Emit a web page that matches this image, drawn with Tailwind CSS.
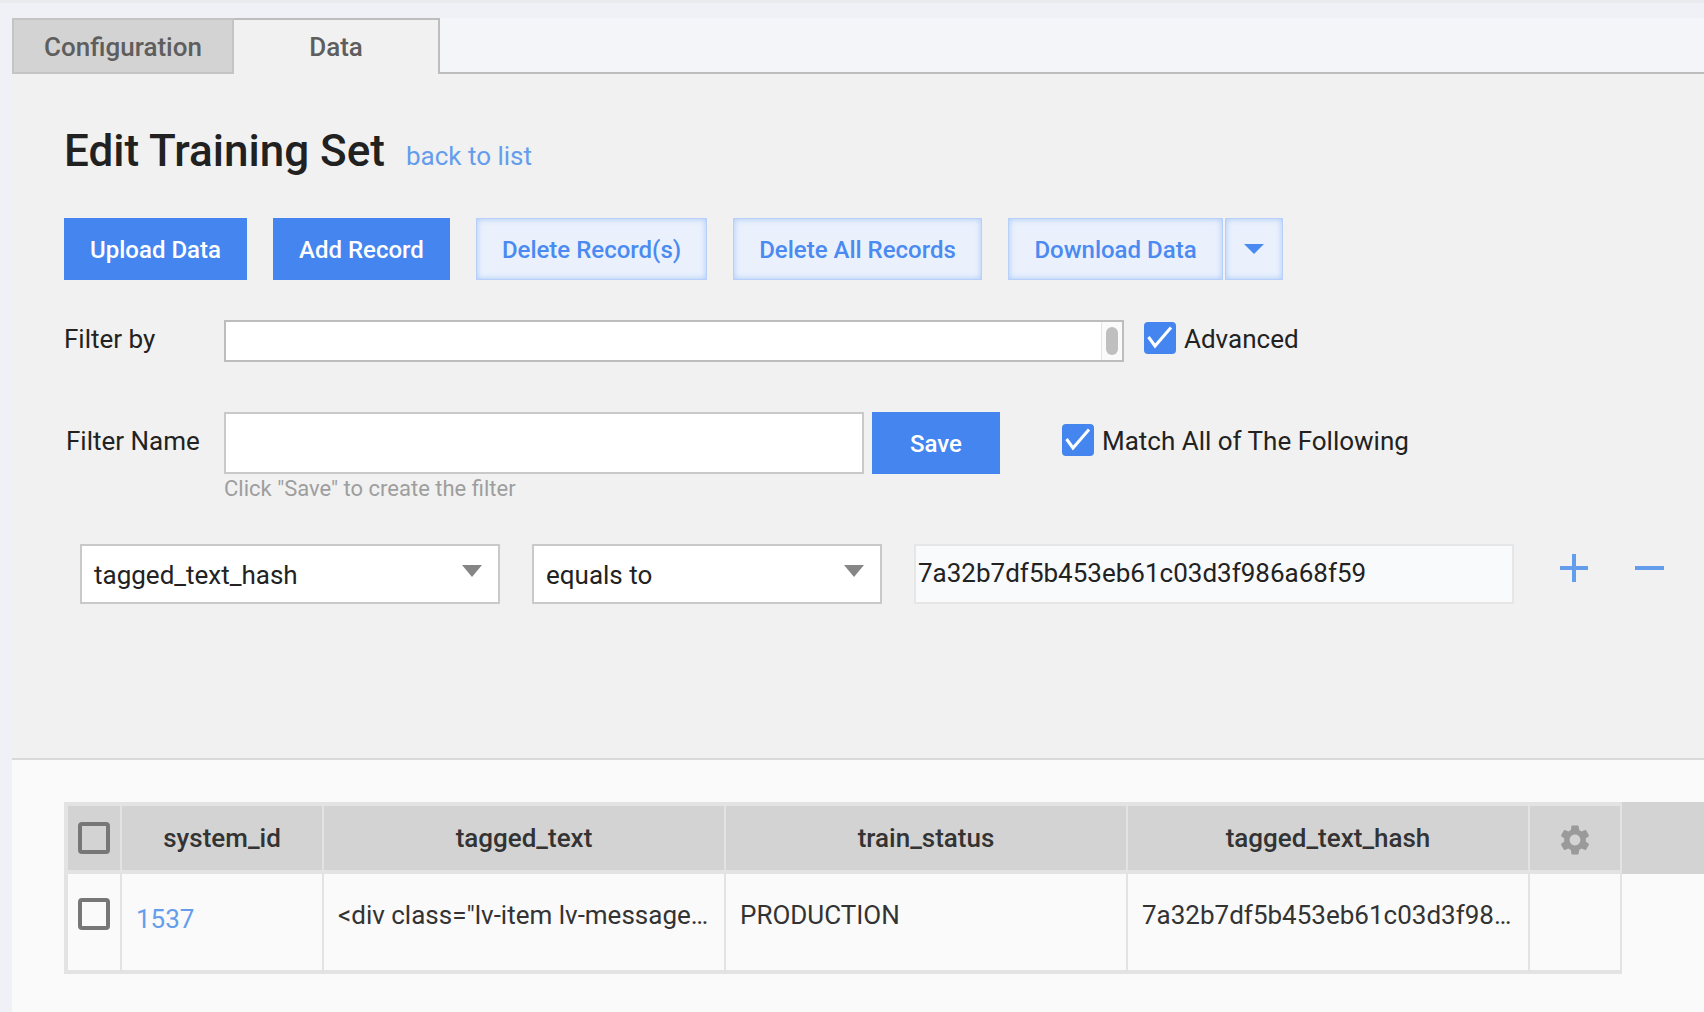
<!DOCTYPE html>
<html lang="en">
<head>
  <meta charset="UTF-8" />
  <title>Edit Training Set</title>
  <script src="https://cdn.jsdelivr.net/npm/@tailwindcss/browser@4"></script>
</head>
<body class="bg-[#eff1f6] font-['Roboto',sans-serif] text-[#222] overflow-hidden">
  <div class="h-[1012px] flex flex-col">
    <div class="h-[3px] bg-[#e9ebef]"></div>
    <div class="flex-1 pl-[12px] pt-[15px] flex flex-col">

      <!-- tabs -->
      <div class="flex h-[56px] bg-[#f3f5f9] border-b-2 border-[#bdbdbd]">
        <div class="w-[222px] h-[56px] pt-[2px] flex items-center justify-center bg-[#d3d3d3] border-2 border-[#c4c4c4] text-[26px] font-medium text-[#5e5e5e]">Configuration</div>
        <div class="w-[206px] h-[56px] flex items-center justify-center bg-[#f1f1f1] border-2 border-l-0 border-b-0 border-[#bdbdbd] text-[26px] font-medium text-[#5e5e5e]">Data</div>
      </div>

      <!-- form panel -->
      <div class="h-[686px] bg-[#f1f1f1] border-b-2 border-[#d9d9d9] pl-[52px]">
        <div class="mt-[47px] h-[60px] flex items-center">
          <h1 class="text-[44px] font-medium text-[#212121]">Edit Training Set</h1>
          <a class="ml-[21px] mt-[11px] text-[26px] text-[#659ded]">back to list</a>
        </div>

        <div class="mt-[37px] flex h-[62px] text-[24px] font-medium">
          <button class="w-[183px] pt-[2px] bg-[#4485f0] text-white">Upload Data</button>
          <button class="ml-[26px] w-[177px] pt-[2px] bg-[#4485f0] text-white">Add Record</button>
          <button class="ml-[26px] w-[231px] pt-[2px] bg-[#eaf1fd] text-[#4a8af1] border border-[#b7d0f9] shadow-[inset_0_0_6px_#a9c7f7]">Delete Record(s)</button>
          <button class="ml-[26px] w-[249px] pt-[2px] bg-[#eaf1fd] text-[#4a8af1] border border-[#b7d0f9] shadow-[inset_0_0_6px_#a9c7f7]">Delete All Records</button>
          <button class="ml-[26px] w-[215px] pt-[2px] bg-[#eaf1fd] text-[#4a8af1] border border-[#b7d0f9] shadow-[inset_0_0_6px_#a9c7f7]">Download Data</button>
          <button class="ml-[2px] w-[58px] flex items-center justify-center bg-[#eaf1fd] border border-[#b7d0f9] shadow-[inset_0_0_6px_#a9c7f7]">
            <svg width="20" height="10" viewBox="0 0 20 10"><path d="M0 0h20L10 10z" fill="#4a8af1"/></svg>
          </button>
        </div>

        <div class="mt-[40px] flex h-[42px] items-center">
          <label class="w-[160px] mb-[4px] text-[26px]">Filter by</label>
          <div class="w-[900px] h-[42px] flex bg-white border-2 border-[#bdbdbd]">
            <div class="flex-1"></div>
            <div class="w-[21px] flex justify-center items-center border-l border-[#e4e4e4] bg-[#fafafa]">
              <div class="w-[12px] h-[28px] rounded-full bg-[#bfbfbf]"></div>
            </div>
          </div>
          <div class="ml-[20px] mb-[6px] w-[32px] h-[32px] rounded-[4px] bg-[#4485f0]">
            <svg width="32" height="32" viewBox="0 0 32 32" fill="none" stroke="#fff" stroke-width="3"><path d="M4.5 15l6.5 9L27 5.5"/></svg>
          </div>
          <span class="ml-[8px] mb-[4px] text-[26px]">Advanced</span>
        </div>

        <div class="mt-[50px] flex h-[62px] items-start">
          <label class="w-[160px] pl-[2px] h-[58px] flex items-center text-[26px]">Filter Name</label>
          <div>
            <div class="w-[640px] h-[62px] bg-white border-2 border-[#c9c9c9]"></div>
            <p class="-mt-[2px] text-[22px] text-[#9e9e9e]">Click "Save" to create the filter</p>
          </div>
          <button class="ml-[8px] w-[128px] h-[62px] pt-[2px] bg-[#4485f0] text-white text-[24px] font-medium">Save</button>
          <div class="ml-[62px] mt-[12px] w-[32px] h-[32px] rounded-[4px] bg-[#4485f0]">
            <svg width="32" height="32" viewBox="0 0 32 32" fill="none" stroke="#fff" stroke-width="3"><path d="M4.5 15l6.5 9L27 5.5"/></svg>
          </div>
          <span class="ml-[8px] mt-[13px] text-[26px] leading-[32px]">Match All of The Following</span>
        </div>

        <div class="mt-[70px] ml-[16px] flex h-[60px] items-start">
          <div class="w-[420px] h-[60px] pt-[2px] bg-white border-2 border-[#c9c9c9] flex items-center justify-between pl-[12px] pr-[16px] text-[26px]">
            tagged_text_hash
            <svg class="mb-[8px]" width="20" height="12" viewBox="0 0 20 12"><path d="M0 0h20L10 12z" fill="#868686"/></svg>
          </div>
          <div class="ml-[32px] w-[350px] h-[60px] pt-[2px] bg-white border-2 border-[#c9c9c9] flex items-center justify-between pl-[12px] pr-[16px] text-[26px]">
            equals to
            <svg class="mb-[8px]" width="20" height="12" viewBox="0 0 20 12"><path d="M0 0h20L10 12z" fill="#868686"/></svg>
          </div>
          <div class="ml-[32px] w-[600px] h-[60px] bg-[#f9fafc] border-2 border-[#e6e6e6] flex items-center pl-[2px] pb-[1px] text-[26px]">7a32b7df5b453eb61c03d3f986a68f59</div>
          <svg class="ml-[46px] mt-[10px]" width="28" height="28" viewBox="0 0 28 28" fill="#659ded"><path d="M12 0h4v12h12v4H16v12h-4V16H0v-4h12z"/></svg>
          <svg class="ml-[47px] mt-[22px]" width="29" height="4" viewBox="0 0 29 4" fill="#659ded"><path d="M0 0h29v4H0z"/></svg>
        </div>
      </div>

      <!-- records table -->
      <div class="flex-1 bg-[#fafafa] pl-[52px] pt-[42px] flex items-start text-[26px] text-[#333]">
        <div class="w-[1558px] bg-[#e3e3e3] p-[4px] pr-[2px]">
          <div class="grid grid-cols-[52px_200px_400px_400px_400px_90px] gap-x-[2px] gap-y-[4px]">
            <div class="h-[64px] bg-[#d3d3d3] flex items-center pl-[10px]">
              <div class="w-[32px] h-[32px] rounded-[4px] border-[4px] border-[#777]"></div>
            </div>
            <div class="bg-[#d3d3d3] flex items-center justify-center font-medium">system_id</div>
            <div class="bg-[#d3d3d3] flex items-center justify-center font-medium">tagged_text</div>
            <div class="bg-[#d3d3d3] flex items-center justify-center font-medium">train_status</div>
            <div class="bg-[#d3d3d3] flex items-center justify-center font-medium">tagged_text_hash</div>
            <div class="bg-[#d3d3d3] flex items-center justify-center">
              <svg class="mt-[4px]" width="30" height="30" viewBox="2 2 20 20" fill="#9a9a9a"><path d="M19.14 12.94c.04-.3.06-.61.06-.94 0-.32-.02-.64-.07-.94l2.03-1.58c.18-.14.23-.41.12-.61l-1.92-3.32c-.12-.22-.37-.29-.59-.22l-2.39.96c-.5-.38-1.03-.7-1.62-.94l-.36-2.54c-.04-.24-.24-.41-.48-.41h-3.84c-.24 0-.43.17-.47.41l-.36 2.54c-.59.24-1.13.57-1.62.94l-2.39-.96c-.22-.08-.47 0-.59.22L2.74 8.87c-.12.21-.08.47.12.61l2.03 1.58c-.05.3-.09.63-.09.94s.02.64.07.94l-2.03 1.58c-.18.14-.23.41-.12.61l1.92 3.32c.12.22.37.29.59.22l2.39-.96c.5.38 1.03.7 1.62.94l.36 2.54c.05.24.24.41.48.41h3.84c.24 0 .44-.17.47-.41l.36-2.54c.59-.24 1.13-.56 1.62-.94l2.39.96c.22.08.47 0 .59-.22l1.92-3.32c.12-.22.07-.47-.12-.61l-2.01-1.58zM12 15.6c-1.98 0-3.6-1.62-3.6-3.6s1.62-3.6 3.6-3.6 3.6 1.62 3.6 3.6-1.62 3.6-3.6 3.6z"/></svg>
            </div>

            <div class="h-[96px] bg-[#fafafa] pl-[10px] pt-[24px]">
              <div class="w-[32px] h-[32px] rounded-[4px] border-[4px] border-[#777]"></div>
            </div>
            <div class="bg-[#fafafa] pl-[14px] pt-[26px] text-[#659ded]">1537</div>
            <div class="bg-[#fafafa] pl-[14px] pt-[22px] truncate">&lt;div class="lv-item lv-message…</div>
            <div class="bg-[#fafafa] pl-[14px] pt-[22px]">PRODUCTION</div>
            <div class="bg-[#fafafa] pl-[14px] pt-[22px] truncate">7a32b7df5b453eb61c03d3f98…</div>
            <div class="bg-[#fafafa]"></div>
          </div>
        </div>
        <div class="flex-1 h-[72px] bg-[#d3d3d3]"></div>
      </div>
    </div>
  </div>
</body>
</html>
